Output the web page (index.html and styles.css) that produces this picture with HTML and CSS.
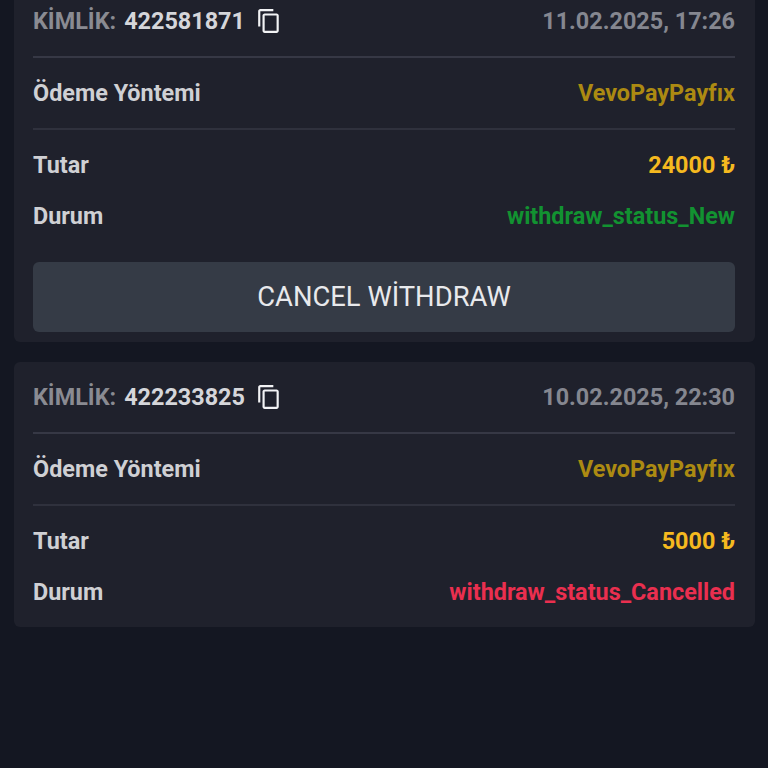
FILE: index.html
```html
<!DOCTYPE html>
<html lang="tr">
<head>
<meta charset="utf-8">
<title>Withdrawals</title>
<link rel="stylesheet" href="styles.css">
</head>
<body>
<main class="list">
  <section class="card">
    <header class="row head">
      <div class="id-group">
        <span class="id-label">KİMLİK:</span>
        <span class="id-value">422581871</span>
        <svg class="copy" viewBox="0 0 24 24" aria-hidden="true"><path d="M16 1H4c-1.1 0-2 .9-2 2v14h2V3h12V1zm3 4H8c-1.1 0-2 .9-2 2v14c0 1.1.9 2 2 2h11c1.1 0 2-.9 2-2V7c0-1.1-.9-2-2-2zm0 16H8V7h11v14z"/></svg>
      </div>
      <span class="date">11.02.2025, 17:26</span>
    </header>
    <div class="row method"><span class="label">Ödeme Yöntemi</span><span class="gold">VevoPayPayfıx</span></div>
    <div class="stats">
      <div class="row stat"><span class="label">Tutar</span><span class="amount">24000 ₺</span></div>
      <div class="row stat"><span class="label">Durum</span><span class="green">withdraw_status_New</span></div>
    </div>
    <button class="cancel" type="button">CANCEL WİTHDRAW</button>
  </section>
  <section class="card">
    <header class="row head">
      <div class="id-group">
        <span class="id-label">KİMLİK:</span>
        <span class="id-value">422233825</span>
        <svg class="copy" viewBox="0 0 24 24" aria-hidden="true"><path d="M16 1H4c-1.1 0-2 .9-2 2v14h2V3h12V1zm3 4H8c-1.1 0-2 .9-2 2v14c0 1.1.9 2 2 2h11c1.1 0 2-.9 2-2V7c0-1.1-.9-2-2-2zm0 16H8V7h11v14z"/></svg>
      </div>
      <span class="date">10.02.2025, 22:30</span>
    </header>
    <div class="row method"><span class="label">Ödeme Yöntemi</span><span class="gold">VevoPayPayfıx</span></div>
    <div class="stats">
      <div class="row stat"><span class="label">Tutar</span><span class="amount">5000 ₺</span></div>
      <div class="row stat"><span class="label">Durum</span><span class="red">withdraw_status_Cancelled</span></div>
    </div>
  </section>
</main>
</body>
</html>
```
FILE: styles.css
```css
html, body {
  margin: 0;
  height: 768px;
  overflow: hidden;
  background: #141722;
}
body {
  font-family: Roboto, "Liberation Sans", sans-serif;
  font-size: 23.4px;
  font-weight: 700;
  color: #cfd0d4;
}
.list {
  display: flex;
  flex-direction: column;
  gap: 20px;
  margin: -14px 13px 0 14px;
}
.card {
  background: #1f212c;
  border-radius: 6px;
  padding: 0 20px 0 19px;
  display: flex;
  flex-direction: column;
}
.row {
  display: flex;
  justify-content: space-between;
  align-items: center;
}
.head {
  height: 70px;
  border-bottom: 2px solid #363845;
}
.method {
  height: 70px;
  border-bottom: 2px solid #2f313d;
}
.stats {
  padding: 9px 0 10px;
  display: flex;
  flex-direction: column;
}
.stat { height: 51px; }
.id-group {
  display: flex;
  align-items: center;
  gap: 8px;
}
.id-label { color: #8a8b92; }
.id-value { color: #d5d6da; }
.copy {
  width: 26px;
  height: 26px;
  margin-left: 3px;
  fill: #f2f3f5;
}
.date { color: #858790; }
.gold { color: #ac8a12; }
.amount { color: #f5b91f; }
.green { color: #129231; }
.red { color: #ea2f4f; }
.cancel {
  height: 70px;
  margin: 11px 0 10px;
  border: 0;
  border-radius: 6px;
  background: #353b46;
  color: #e8e9ec;
  font: 400 27.4px Roboto, "Liberation Sans", sans-serif;
}
```
